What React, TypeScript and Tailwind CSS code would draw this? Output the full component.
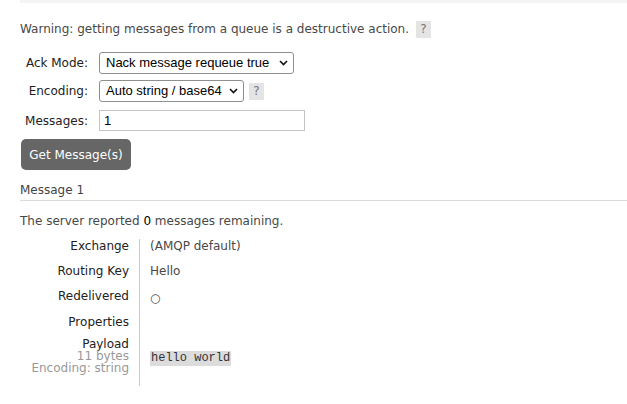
import React from 'react';

const sans = { fontFamily: '"DejaVu Sans", Verdana, sans-serif' };
const ctrl = { fontFamily: '"Liberation Sans", Arial, sans-serif' };

function Help({ className = '' }: { className?: string }) {
  return (
    <span
      className={`inline-flex h-[17px] w-[15px] items-center justify-center bg-[#e4e4e4] text-[12px] text-[#777] ${className}`}
    >
      ?
    </span>
  );
}

function Chevron() {
  return (
    <svg width="9" height="6" viewBox="0 0 9 6" className="shrink-0">
      <path d="M1 1 L4.5 4.5 L8 1" fill="none" stroke="#111" strokeWidth="1.6" />
    </svg>
  );
}

function FakeSelect({ label, width }: { label: string; width: string }) {
  return (
    <div
      className={`flex h-[22px] ${width} items-center justify-between rounded-[3px] border border-[#8f8f8f] bg-white pl-[6px] pr-[5px] text-[13px] text-black`}
      style={ctrl}
    >
      <span>{label}</span>
      <Chevron />
    </div>
  );
}

function Row({ label, children, pb = 'pb-[11px]' }: { label: React.ReactNode; children?: React.ReactNode; pb?: string }) {
  return (
    <div className="flex">
      <div className={`w-[119px] shrink-0 pr-[10px] text-right text-[#222] leading-[14px] ${pb}`}>{label}</div>
      <div className={`flex-1 border-l border-[#ccc] pl-[10px] leading-[14px] ${pb}`}>{children}</div>
    </div>
  );
}

export default function App() {
  return (
    <div className="h-[404px] w-[627px] bg-white text-[12px] text-[#484848]" style={sans}>
      <div className="ml-[20px] h-[3px] bg-[#f4f4f4]" />

      <div className="pl-[20px]">
        {/* Warning */}
        <div className="mt-[18px] flex items-center gap-[7px] leading-[17px]">
          <span>Warning: getting messages from a queue is a destructive action.</span>
          <Help />
        </div>

        {/* Form */}
        <div className="mt-[14px] flex flex-col gap-[6px]">
          <div className="flex items-center">
            <label className="w-[69px] pr-[1px] text-right text-[#222]">Ack Mode:</label>
            <div className="ml-[10px]">
              <FakeSelect label="Nack message requeue true" width="w-[195px]" />
            </div>
          </div>
          <div className="flex items-center">
            <label className="w-[69px] pr-[1px] text-right text-[#222]">Encoding:</label>
            <div className="ml-[10px] flex items-center gap-[5px]">
              <FakeSelect label="Auto string / base64" width="w-[145px]" />
              <Help />
            </div>
          </div>
          <div className="mt-[2px] flex items-center">
            <label className="w-[69px] pr-[1px] text-right text-[#222]">Messages:</label>
            <div className="ml-[10px]">
              <div
                className="flex h-[21px] w-[206px] items-center border border-[#c4c4c4] bg-white pl-[4px] text-[13px] text-black"
                style={ctrl}
              >
                1
              </div>
            </div>
          </div>
        </div>

        <button className="ml-[1px] mt-[8px] h-[31px] w-[110px] rounded-[5px] bg-[#666] text-[12px] text-white" style={sans}>
          Get Message(s)
        </button>

        {/* Message */}
        <div className="mt-[13px] border-b border-[#dcdcdc] pb-[3px] leading-[14px] text-[#444]">Message 1</div>

        <div className="mt-[13px] leading-[14px]">
          The server reported <span className="text-black">0</span> messages remaining.
        </div>

        <div className="mt-[11px]">
          <Row label="Exchange">(AMQP default)</Row>
          <Row label="Routing Key">Hello</Row>
          <Row label="Redelivered" pb="pb-[12px]">
            <span className="inline-block translate-y-[2px] text-[12px]">○</span>
          </Row>
          <Row label="Properties" pb="pb-[9px]" />
          <div className="flex">
            <div className="w-[119px] shrink-0 pr-[10px] pb-[12px] text-right leading-[12px]">
              <div className="text-[#222]">Payload</div>
              <div className="text-[#999]">11 bytes</div>
              <div className="text-[#999]">Encoding: string</div>
            </div>
            <div className="flex flex-1 items-center border-l border-[#ccc] pb-[12px] pl-[10px] pt-[4px]">
              <span
                className="bg-[#dcdcdc] px-[1px] text-[12px] leading-[15px] text-[#333]"
                style={{ fontFamily: '"Liberation Mono", "Courier New", monospace' }}
              >
                hello world
              </span>
            </div>
          </div>
        </div>
      </div>
    </div>
  );
}
